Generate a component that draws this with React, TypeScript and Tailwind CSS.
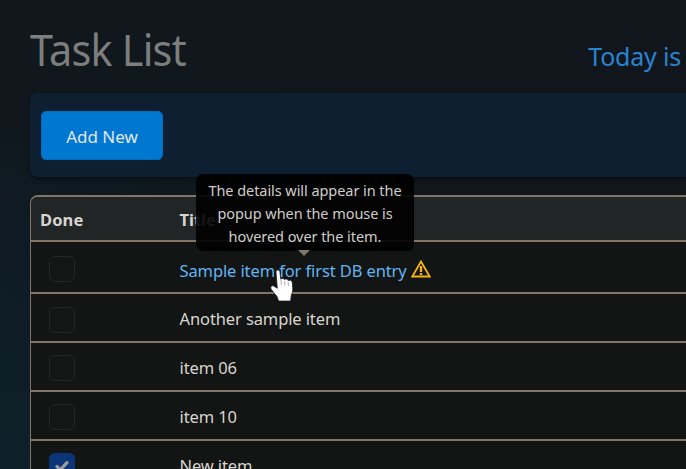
import React from "react";

type Task = { title: string; done: boolean; offset: string };

const tasks: Task[] = [
  { title: "Another sample item", done: false, offset: "pt-[5px]" },
  { title: "item 06", done: false, offset: "pt-[3px]" },
  { title: "item 10", done: false, offset: "pt-[3px]" },
  { title: "New item", done: true, offset: "pt-[3px]" },
];

function Check({ done }: { done: boolean }) {
  return (
    <span
      className={
        done
          ? "flex h-[26px] w-[26px] items-center justify-center rounded-[6px] bg-[#0a3578]"
          : "flex h-[26px] w-[26px] rounded-[6px] border border-[#252727] bg-[#141616]"
      }
    >
      {done && (
        <svg viewBox="0 0 20 20" className="h-[22px] w-[22px]" fill="none" stroke="#9c9c9c" strokeWidth="3" strokeLinecap="round" strokeLinejoin="round">
          <path d="m5.500 10.500 3 3L14.500 7" />
        </svg>
      )}
    </span>
  );
}

function Warning() {
  return (
    <svg viewBox="0 0 20 18" className="ml-[4.500px] h-[18px] w-[20px]" fill="none" stroke="#f5b50f">
      <path d="M10 1.5 1.3 16.5h17.4Z" strokeWidth="1.8" />
      <path d="M10 6v6M10 13v2" strokeWidth="2.4" />
    </svg>
  );
}

function Pointer() {
  return (
    <svg viewBox="0 0 26 34" className="absolute left-[90.500px] top-[27px] h-[34px] w-[26px]" fill="#fff">
      <path
        d="M7.900 1C9 1 9.800 1.800 9.900 2.900l.9 7.400c.5-1.300 3.200-1.200 3.700.4.700-1.100 3.400-.8 3.800 1 .9-.9 3.700-.4 3.900 1.500l.5 5.500c.2 3-.4 5.200-1.400 7.400L20.600 32H8.600L7 27.500 1.200 20.300c-1.200-2.600.6-4.300 2.800-3.100l3.300 2.100L6 2.900C5.900 1.800 6.800 1 7.900 1Z"
        stroke="#151515"
        strokeWidth="0.7"
      />
      <path d="m11 11 .4 5M14.600 12l.3 4.500M18.200 13l.2 4" fill="none" stroke="#888" strokeWidth="0.7" />
    </svg>
  );
}

function Tooltip() {
  return (
    <div className="absolute left-[16.500px] top-[-68px] z-10 h-[77px] w-[218px] rounded-[7px] bg-black/90 pt-[5px] text-center text-[14.500px] leading-[23px] tracking-[-0.06px] text-[#cfcdc9]">
      <div>The details will appear in the</div>
      <div>popup when the mouse is</div>
      <div>hovered over the item.</div>
      <div className="absolute left-[102px] top-[76px] h-0 w-0 border-x-[6px] border-t-[6px] border-x-transparent border-t-[#827568]" />
    </div>
  );
}

export default function App() {
  return (
    <div className="h-[469px] w-[686px] overflow-hidden bg-[#10161c] bg-[linear-gradient(to_right,transparent_0%,#10161c_60%),linear-gradient(to_bottom,#10171d_0%,#10181e_25%,#0e1b24_50%,#0e2029_100%)] pl-[30px] font-['Noto_Sans','Open_Sans',sans-serif] text-[16.500px] text-[#d8d5d0]">
      <header className="flex h-[93px] items-start justify-between">
        <h1 className="origin-left scale-x-[0.94] pt-[17px] text-[44px] leading-[64px] tracking-[-0.8px] text-[#7d7e7e]">Task List</h1>
        <div className="whitespace-nowrap pr-[5px] pt-[37px] text-[25px] leading-[38px] tracking-[-0.2px] text-[#2884cf]">Today is</div>
      </header>

      <section className="flex h-[84px] items-start rounded-l-[8px] bg-[#0d1f30] pl-[11px] pt-[18px] shadow-[0_2px_4px_rgba(0,0,0,0.45)]">
        <button className="h-[49px] w-[122px] rounded-[5px] border border-[#006cc0] bg-[#0077d0] pt-[3px] text-[17px] text-[#e4e6e7]">Add New</button>
      </section>

      <main className="mt-[18px] rounded-tl-[8px] border-l border-t-2 border-[#827568] bg-[#131514]">
        <div className="flex h-[45px] items-center rounded-tl-[7px] border-b-2 border-[#827568] bg-[#222525] pl-[9px] pt-[3px] font-bold">
          <span className="w-[139.500px] tracking-[0.1px]">Done</span>
          <span>Title</span>
        </div>
        <div className="flex h-[52px] items-center border-b-2 border-[#827568] pl-[18px]">
          <div className="w-[130.500px] pt-[3px]"><Check done={false} /></div>
          <div className="relative flex h-full items-center whitespace-nowrap pt-[8px] text-[#62b4f2]">
            <span className="tracking-[-0.110px]">Sample item for first DB entry</span>
            <span className="pb-[4px]"><Warning /></span>
            <Tooltip />
            <Pointer />
          </div>
        </div>
        {tasks.map((task) => (
          <div key={task.title} className="flex h-[49px] items-center border-b-2 border-[#827568] pl-[18px]">
            <div className={`w-[130.500px] ${task.offset}`}><Check done={task.done} /></div>
            <span className="pt-[3px] tracking-[-0.110px]">{task.title}</span>
          </div>
        ))}
      </main>
    </div>
  );
}
